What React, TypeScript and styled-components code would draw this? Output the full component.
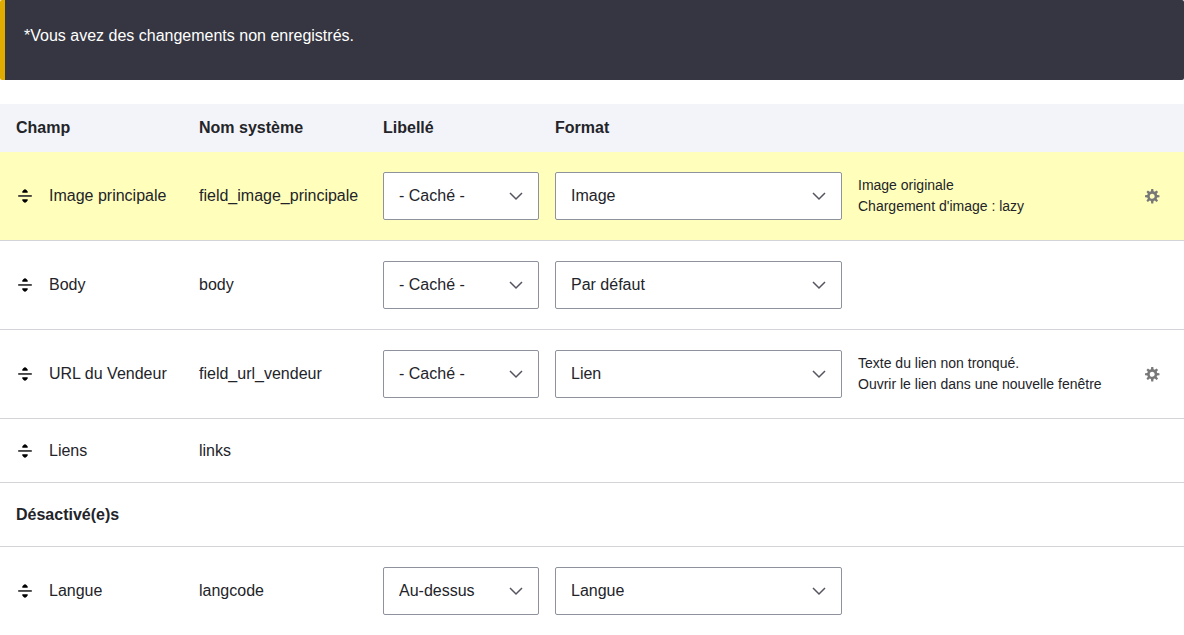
import React from "react";
import styled, { createGlobalStyle } from "styled-components";

const GlobalStyle = createGlobalStyle`
  *, *::before, *::after { box-sizing: border-box; }
  body {
    margin: 0;
    background: #fff;
    color: #232429;
    font: 16px/24px "Liberation Sans", Arial, sans-serif;
  }
`;

const Warning = styled.div`
  margin-bottom: 24px;
  padding: 24px 19px 32px;
  border-left: 5px solid #e0ac00;
  border-radius: 2px;
  background: #353641;
  color: #fff;
`;

const Table = styled.table`
  width: 100%;
  table-layout: fixed;
  border-collapse: separate;
  border-spacing: 0;
`;

const Column = styled.col<{ $width?: number }>`
  width: ${({ $width }) => ($width ? `${$width}px` : "auto")};
`;

const HeaderCell = styled.th`
  height: 48px;
  padding: 0 8px;
  background: #f3f4f9;
  text-align: left;
  font-weight: 700;
  &:first-child { padding-left: 16px; }
`;

const Row = styled.tr<{ $changed?: boolean }>`
  background: ${({ $changed }) => ($changed ? "#ffb" : "#fff")};
`;

const Cell = styled.td<{ $tall?: boolean }>`
  height: ${({ $tall }) => ($tall ? 89 : 64)}px;
  padding: 0 8px;
  border-bottom: 1px solid #d3d4d9;
  vertical-align: middle;
  white-space: nowrap;
  &:first-child { padding-left: 16px; }
`;

const RegionCell = styled(Cell)`
  font-weight: 700;
`;

const FieldName = styled.div`
  display: flex;
  align-items: center;
  gap: 15px;
`;

const DragHandle = styled.button`
  display: flex;
  padding: 0;
  border: 0;
  background: none;
  color: #000;
  cursor: move;
`;

const SelectBox = styled.div`
  position: relative;
  display: flex;
`;

const SelectControl = styled.select`
  appearance: none;
  width: 100%;
  height: 48px;
  padding: 0 40px 0 15px;
  border: 1px solid #8e929c;
  border-radius: 2px;
  background: #fff;
  color: inherit;
  font: inherit;
`;

const Chevron = styled.svg`
  position: absolute;
  top: 20px;
  right: 16px;
  pointer-events: none;
`;

const Summary = styled.div`
  font-size: 14px;
  line-height: 21px;
`;

const SettingsCell = styled(Cell)`
  padding-right: 24px;
`;

const SettingsButton = styled.button`
  display: flex;
  margin-left: auto;
  padding: 0;
  border: 0;
  background: none;
  color: #787878;
  cursor: pointer;
`;

function DragIcon() {
  return (
    <svg width="18" height="16" viewBox="0 0 18 16" aria-hidden="true">
      <path fill="#333" d="M2.200 7.100h13.600v1.700H2.200z" />
      <path
        fill="currentColor"
        d="M6.100 4.100C6.300 3.200 8.200 1.200 9 1.200s2.700 2 2.900 2.900c0 .4-.3.600-.7.600H6.800c-.4 0-.7-.2-.7-.6zM6.100 11.900c.2.900 2.100 2.900 2.900 2.900s2.700-2 2.900-2.900c0-.4-.3-.6-.7-.6H6.800c-.4 0-.7.2-.7.6z"
      />
    </svg>
  );
}

function GearIcon() {
  return (
    <svg width="16" height="16" viewBox="0 0 16 16" aria-hidden="true">
      <path
        fill="currentColor"
        d="M15.426 9.249a7.29 7.29 0 00.076-.998c0-.36-.035-.71-.086-1.056l-2.275-.293a5.039 5.039 0 00-.497-1.2l1.396-1.808a7.156 7.156 0 00-1.459-1.452l-1.807 1.391a5.058 5.058 0 00-1.2-.499l-.292-2.252C8.943 1.033 8.604 1 8.252 1s-.694.034-1.032.082l-.291 2.251a5.076 5.076 0 00-1.2.499L3.924 2.441a7.3 7.3 0 00-1.459 1.452L3.86 5.701a5.076 5.076 0 00-.499 1.2l-2.276.294A7.35 7.35 0 001 8.251c0 .34.031.671.077.998l2.285.295c.115.426.284.826.499 1.2L2.444 12.58c.411.55.896 1.038 1.443 1.452l1.842-1.42c.374.215.774.383 1.2.498l.298 2.311c.337.047.677.08 1.025.08s.688-.033 1.021-.08l.299-2.311a5.056 5.056 0 001.201-.498l1.842 1.42a7.326 7.326 0 001.443-1.452l-1.416-1.837c.215-.373.383-.773.498-1.199zm-7.174 1.514a2.54 2.54 0 110-5.082 2.542 2.542 0 010 5.082z"
      />
    </svg>
  );
}

function Select({ label, value }: { label: string; value: string }) {
  return (
    <SelectBox>
      <SelectControl aria-label={label} defaultValue={value}>
        <option>{value}</option>
      </SelectControl>
      <Chevron width="14" height="9" viewBox="0 0 14 9" aria-hidden="true">
        <path fill="none" stroke="#545560" strokeWidth="1.5" d="M1 1l6 6 6-6" />
      </Chevron>
    </SelectBox>
  );
}

type Field = {
  name: string;
  machine: string;
  label?: string;
  format?: string;
  summary?: string[];
  changed?: boolean;
};

const enabledFields: Field[] = [
  {
    name: "Image principale",
    machine: "field_image_principale",
    label: "- Caché -",
    format: "Image",
    summary: ["Image originale", "Chargement d'image : lazy"],
    changed: true,
  },
  { name: "Body", machine: "body", label: "- Caché -", format: "Par défaut" },
  {
    name: "URL du Vendeur",
    machine: "field_url_vendeur",
    label: "- Caché -",
    format: "Lien",
    summary: ["Texte du lien non tronqué.", "Ouvrir le lien dans une nouvelle fenêtre"],
  },
  { name: "Liens", machine: "links" },
];

const disabledFields: Field[] = [
  { name: "Langue", machine: "langcode", label: "Au-dessus", format: "Langue" },
];

function FieldRow({ field }: { field: Field }) {
  const { name, machine, label, format, summary, changed } = field;
  return (
    <Row $changed={changed}>
      <Cell $tall={!!format}>
        <FieldName>
          <DragHandle type="button" aria-label={`Déplacer ${name}`}>
            <DragIcon />
          </DragHandle>
          {name}
        </FieldName>
      </Cell>
      <Cell>{machine}</Cell>
      <Cell>{label && <Select label={`Libellé de ${name}`} value={label} />}</Cell>
      <Cell>{format && <Select label={`Format de ${name}`} value={format} />}</Cell>
      <Cell>
        {summary && (
          <Summary>
            {summary.map((line) => (
              <div key={line}>{line}</div>
            ))}
          </Summary>
        )}
      </Cell>
      <SettingsCell>
        {summary && (
          <SettingsButton type="button" aria-label={`Modifier ${name}`}>
            <GearIcon />
          </SettingsButton>
        )}
      </SettingsCell>
    </Row>
  );
}

export default function App() {
  return (
    <>
      <GlobalStyle />
      <main>
        <Warning role="status">*Vous avez des changements non enregistrés.</Warning>
        <Table>
          <colgroup>
            <Column $width={191} />
            <Column $width={184} />
            <Column $width={172} />
            <Column $width={303} />
            <Column />
            <Column $width={56} />
          </colgroup>
          <thead>
            <tr>
              <HeaderCell scope="col">Champ</HeaderCell>
              <HeaderCell scope="col">Nom système</HeaderCell>
              <HeaderCell scope="col">Libellé</HeaderCell>
              <HeaderCell scope="col" colSpan={3}>Format</HeaderCell>
            </tr>
          </thead>
          <tbody>
            {enabledFields.map((field) => (
              <FieldRow key={field.machine} field={field} />
            ))}
            <Row>
              <RegionCell colSpan={6}>Désactivé(e)s</RegionCell>
            </Row>
            {disabledFields.map((field) => (
              <FieldRow key={field.machine} field={field} />
            ))}
          </tbody>
        </Table>
      </main>
    </>
  );
}
